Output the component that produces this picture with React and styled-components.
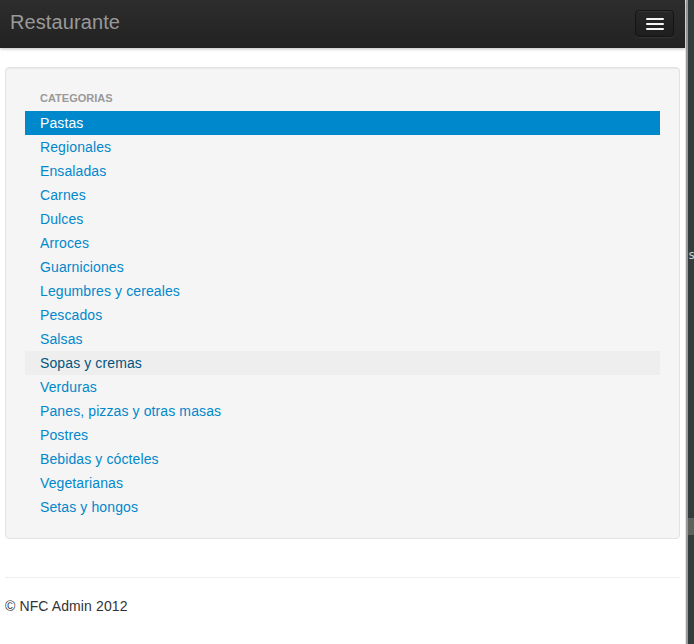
import React from "react";
import styled, { createGlobalStyle } from "styled-components";

const Global = createGlobalStyle`
  html, body { margin: 0; padding: 0; height: 100%; overflow: hidden; }
  body { font-family: "Liberation Sans", Arial, sans-serif; font-size: 14px; line-height: 18px; color: #333; background: #fff; }
`;

const Screen = styled.div`
  display: flex;
  height: 644px;
`;

const Main = styled.div`
  width: 685px;
  flex: none;
  background: #fff;
  display: flex;
  flex-direction: column;
`;

const Divider = styled.div`
  width: 3px;
  flex: none;
  background: linear-gradient(to right, #e4e4e4 0, #e4e4e4 1px, #9a9a9a 1px, #9a9a9a 3px);
`;

const SidePane = styled.div`
  flex: 1;
  background: #343c3c;
  display: flex;
  flex-direction: column;
  padding-top: 247px;
  overflow: hidden;
`;

const PaneText = styled.span`
  font-family: "DejaVu Sans Mono", monospace;
  font-size: 12px;
  line-height: 16px;
  color: #c9d3d6;
`;

const Thumb = styled.div`
  margin-top: 255px;
  height: 17px;
  background: #5c625c;
`;

const Navbar = styled.header`
  height: 48px;
  flex: none;
  display: flex;
  align-items: center;
  justify-content: space-between;
  padding: 0 11px 0 10px;
  background: linear-gradient(to bottom, #2d2d2d, #222222);
  box-shadow: 0 1px 3px rgba(0, 0, 0, 0.25);
  position: relative;
  z-index: 1;
`;

const Brand = styled.a`
  font-size: 20px;
  line-height: 24px;
  letter-spacing: 0.1px;
  color: #999;
  text-decoration: none;
  margin-top: -5px;
`;

const MenuButton = styled.button`
  width: 39px;
  height: 27px;
  margin-top: -1px;
  padding: 0;
  display: flex;
  flex-direction: column;
  align-items: center;
  justify-content: center;
  gap: 3px;
  background: linear-gradient(to bottom, #272727, #1e1e1e);
  border: 1px solid #141414;
  border-radius: 4px;
  box-shadow: inset 0 1px 0 rgba(255, 255, 255, 0.06), 0 1px 0 rgba(255, 255, 255, 0.07);
`;

const Bar = styled.span`
  display: block;
  width: 18px;
  height: 2px;
  background: #f5f5f5;
  border-radius: 1px;
`;

const Content = styled.div`
  padding: 19px 5px 0;
`;

const Well = styled.div`
  background: #f5f5f5;
  border: 1px solid #e3e3e3;
  border-radius: 4px;
  box-shadow: inset 0 1px 1px rgba(0, 0, 0, 0.05);
  padding: 19px;
  margin-bottom: 38px;
`;

const NavList = styled.ul`
  list-style: none;
  margin: 0;
  padding: 0 15px;
`;

const NavHeader = styled.li`
  padding: 2px 15px 4px;
  margin: 0 -15px;
  font-size: 11px;
  line-height: 18px;
  font-weight: bold;
  color: #999;
  text-transform: uppercase;
`;

const NavItem = styled.li``;

const NavLink = styled.a`
  display: block;
  margin: 0 -15px;
  padding: 3px 15px;
  font-size: 14px;
  line-height: 18px;
  letter-spacing: 0.11px;
  text-decoration: none;
  color: ${(p) => (p.$active ? "#fff" : p.$hover ? "#005580" : "#0088cc")};
  background: ${(p) => (p.$active ? "#0088cc" : p.$hover ? "#eeeeee" : "transparent")};
`;

const Rule = styled.hr`
  margin: 0;
  border: 0;
  border-top: 1px solid #eee;
  border-bottom: 1px solid #fff;
`;

const Footer = styled.footer`
  padding-top: 18px;
  font-size: 14px;
  line-height: 18px;
  letter-spacing: 0.11px;
  color: #333;
`;

const categories = [
  "Pastas",
  "Regionales",
  "Ensaladas",
  "Carnes",
  "Dulces",
  "Arroces",
  "Guarniciones",
  "Legumbres y cereales",
  "Pescados",
  "Salsas",
  "Sopas y cremas",
  "Verduras",
  "Panes, pizzas y otras masas",
  "Postres",
  "Bebidas y cócteles",
  "Vegetarianas",
  "Setas y hongos",
];

export default function App() {
  return (
    <>
      <Global />
      <Screen>
        <Main>
          <Navbar>
            <Brand href="#">Restaurante</Brand>
            <MenuButton aria-label="Menu">
              <Bar />
              <Bar />
              <Bar />
            </MenuButton>
          </Navbar>
          <Content>
            <Well>
              <NavList>
                <NavHeader>Categorias</NavHeader>
                {categories.map((c, i) => (
                  <NavItem key={c}>
                    <NavLink href="#" $active={i === 0} $hover={c === "Sopas y cremas"}>
                      {c}
                    </NavLink>
                  </NavItem>
                ))}
              </NavList>
            </Well>
            <Rule />
            <Footer>© NFC Admin 2012</Footer>
          </Content>
        </Main>
        <Divider />
        <SidePane>
          <PaneText>s</PaneText>
          <Thumb />
        </SidePane>
      </Screen>
    </>
  );
}
